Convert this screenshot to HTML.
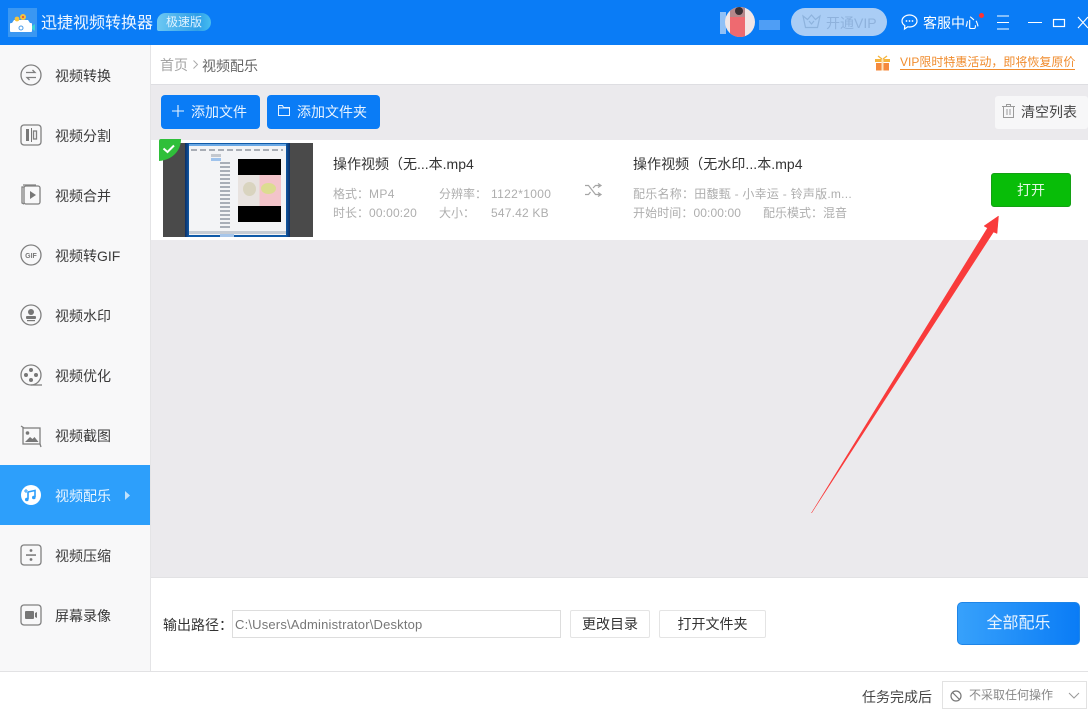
<!DOCTYPE html>
<html lang="zh"><head><meta charset="utf-8"><title>迅捷视频转换器</title>
<style>
html,body{margin:0;padding:0;width:1088px;height:712px;overflow:hidden;background:#fff}
body{position:relative;font-family:"Liberation Sans","Microsoft YaHei","Noto Sans CJK SC",sans-serif;font-size:14px;color:#333}
.a{position:absolute;white-space:nowrap}
svg{position:absolute;overflow:visible}
.nav{position:absolute;left:55px;font-size:14px;line-height:20px;color:#3a3a3a;white-space:nowrap}
.g{color:#aeaeae;font-size:12px;line-height:16px;position:absolute;white-space:nowrap}
.v{letter-spacing:.35px}
.btn{position:absolute;box-sizing:border-box;text-align:center;white-space:nowrap}
.ic{fill:none;stroke:#808080;stroke-width:1.3}
</style></head><body>
<div class="a" style="left:0;top:0;width:1088px;height:45px;background:#0a7cf6"></div>
<div class="a" style="left:8px;top:8px;width:29px;height:29px;background:#3a97f2"></div>
<svg style="left:0;top:0" width="40" height="45"><rect x="10" y="23" width="22" height="9" rx="1" fill="#fff"/><path d="M12 23l2-3h14l2 3z" fill="#fff"/><circle cx="17" cy="19" r="2.400" fill="#f5c33b"/><circle cx="23" cy="17" r="3" fill="#f5c33b"/><circle cx="23" cy="17" r="1.100" fill="#e5573f"/><path d="M32 26l3-2v7l-3-2z" fill="#36d0d8"/><circle cx="21" cy="28" r="2" fill="none" stroke="#4b9ce8"/></svg>
<div class="a" style="left:41px;top:13px;font-size:16px;line-height:21px;color:#eef6ff">迅捷视频转换器</div>
<div class="a" style="left:157px;top:13px;width:54px;height:18px;border-radius:9px 10px 9px 2px;background:linear-gradient(90deg,#6cc8f2,#2f9fe8 75%,#46bdf0);color:#dff2ff;font-size:12px;line-height:18px;text-indent:9px">极速版</div>
<div class="a" style="left:720px;top:12px;width:6px;height:22px;background:#8fc0f7"></div>
<div class="a" style="left:725px;top:7px;width:30px;height:30px;border-radius:50%;background:#f1e6e6;overflow:hidden"><div class="a" style="left:5px;top:0;width:15px;height:30px;background:#b4878a"></div><div class="a" style="left:5px;top:10px;width:15px;height:20px;background:#ee6a70"></div><div class="a" style="left:10px;top:0;width:8px;height:8px;background:#3a3035;border-radius:50%"></div></div>
<div class="a" style="left:759px;top:20px;width:21px;height:10px;background:#4f9ef5"></div>
<div class="a" style="left:791px;top:8px;width:96px;height:28px;border-radius:14px;background:#aacdf5"></div>
<svg style="left:802px;top:14px" width="20" height="16"><path d="M1 2l4.500 3.500L9.500 1l4 4.500L18 2l-2.500 11.500h-12z" fill="none" stroke="#8eb3dd" stroke-width="1.200"/><path d="M7 7l2.500 3L12 7" fill="none" stroke="#8eb3dd" stroke-width="1.200"/></svg>
<div class="a" style="left:826px;top:13px;font-size:14px;line-height:20px;color:#8fb2dc">开通VIP</div>
<svg style="left:901px;top:14px" width="17" height="16"><path d="M8.500 1C4.400 1 1 3.700 1 7c0 1.900 1.100 3.500 2.800 4.600L3.500 15l3.300-2.200c.5.100 1.100.2 1.700.2 4.100 0 7.500-2.700 7.500-6s-3.400-6-7.500-6z" fill="none" stroke="#fff" stroke-width="1.200"/><circle cx="5.500" cy="7" r=".9" fill="#fff"/><circle cx="8.500" cy="7" r=".9" fill="#fff"/><circle cx="11.500" cy="7" r=".9" fill="#fff"/></svg>
<div class="a" style="left:923px;top:13px;font-size:14px;line-height:20px;color:#fff">客服中心</div>
<div class="a" style="left:979px;top:13px;width:5px;height:5px;border-radius:50%;background:#f33"></div>
<svg style="left:997px;top:15px" width="91" height="15"><path d="M0 1h12M0 7.500h12M0 14h12M31 7.500h14" stroke="#fff" stroke-width="1" fill="none"/><rect x="56.500" y="4.500" width="11" height="7" fill="none" stroke="#fff" stroke-width="1.200"/><path d="M81 2l10 11M91 2L81 13" stroke="#fff" stroke-width="1.100" fill="none"/></svg>

<div class="a" style="left:0;top:45px;width:150px;height:626px;background:#f8f8f9;border-right:1px solid #e4e4e6"></div>
<div class="a" style="left:0;top:465px;width:150px;height:60px;background:#2d9ffb"></div>
<div class="nav" style="top:66px">视频转换</div>
<div class="nav" style="top:126px">视频分割</div>
<div class="nav" style="top:186px">视频合并</div>
<div class="nav" style="top:246px">视频转GIF</div>
<div class="nav" style="top:306px">视频水印</div>
<div class="nav" style="top:366px">视频优化</div>
<div class="nav" style="top:426px">视频截图</div>
<div class="nav" style="top:486px;color:#e8f5ff">视频配乐</div>
<div class="nav" style="top:546px">视频压缩</div>
<div class="nav" style="top:606px">屏幕录像</div>
<svg style="left:0;top:45px" width="150" height="600">
<circle class="ic" cx="31" cy="30" r="10"/><path class="ic" d="M26 27.500h9l-2.500-2.500M36 32.500h-9l2.500 2.500"/>
<rect class="ic" x="21" y="80" width="20" height="20" rx="3"/><rect x="26" y="84" width="3" height="12" fill="#777"/><rect x="31" y="83" width="1" height="14" fill="#777"/><rect class="ic" x="33.500" y="86" width="3" height="8"/>
<rect class="ic" x="24" y="141" width="16" height="18" rx="2"/><path class="ic" d="M24 142h-2v16l2 1M23 140h13"/><path d="M30 146l6 4-6 4z" fill="#777"/>
<circle class="ic" cx="31" cy="210" r="10"/><text x="31" y="213" text-anchor="middle" font-size="7" font-weight="700" fill="#777" font-family="Liberation Sans">GIF</text>
<circle class="ic" cx="31" cy="270" r="10"/><circle cx="31" cy="267" r="3" fill="#777"/><rect x="26" y="271" width="10" height="3" rx="1" fill="#777"/><rect x="27" y="275" width="8" height="1.200" fill="#777"/>
<circle class="ic" cx="31" cy="330" r="10"/><path class="ic" d="M31 340h11"/><circle cx="31" cy="325" r="2" fill="#777"/><circle cx="31" cy="335" r="2" fill="#777"/><circle cx="26" cy="330" r="2" fill="#777"/><circle cx="36" cy="330" r="2" fill="#777"/>
<rect class="ic" x="23" y="383" width="17" height="16"/><path class="ic" d="M21 381l3 2M40 399l1 3"/><circle cx="27.500" cy="388" r="1.800" fill="#777"/><path d="M25 397l5-5 2.500 2 2-2 4 5z" fill="#777"/>
<circle cx="31" cy="450" r="10" fill="#fff"/><path d="M28 447v7M28 447l7-1.500v6.500" stroke="#2d9ffb" stroke-width="1.600" fill="none"/><circle cx="26.800" cy="454.500" r="1.800" fill="#2d9ffb"/><circle cx="33.800" cy="452.500" r="1.800" fill="#2d9ffb"/><path d="M24 446h4M26 444v4" stroke="#2d9ffb" fill="none"/>
<path d="M125 446l5 4.500-5 4.500z" fill="#bfe1fc"/>
<rect class="ic" x="21" y="500" width="20" height="20" rx="3"/><rect x="26" y="509.300" width="10" height="1.500" fill="#777"/><circle cx="31" cy="505.500" r="1.400" fill="#777"/><circle cx="31" cy="514.500" r="1.400" fill="#777"/>
<rect class="ic" x="21" y="560" width="20" height="20" rx="3"/><rect x="25" y="566" width="9" height="8" rx="1" fill="#777"/><path d="M35 568l2-1v6l-2-1z" fill="#777"/>
</svg>

<div class="a" style="left:151px;top:45px;width:937px;height:39px;background:#fff;border-bottom:1px solid #dedee2"></div>
<div class="a" style="left:160px;top:55px;font-size:14px;line-height:20px;color:#a5a5a5">首页</div>
<svg style="left:193px;top:60px" width="6" height="10"><path d="M.5 .5l4 4-4 4" fill="none" stroke="#aaa"/></svg>
<div class="a" style="left:202px;top:56px;font-size:14px;line-height:20px;color:#666">视频配乐</div>
<svg style="left:875px;top:56px" width="15" height="15"><rect x="0" y="3" width="15" height="3" fill="#f5b43c"/><rect x="1" y="7" width="13" height="7.500" fill="#f58a3c"/><rect x="6.500" y="3" width="2" height="11.500" fill="#fde3b8"/><path d="M3 0l4 3M12 0L8 3" stroke="#f5b43c" stroke-width="1.300"/></svg>
<div class="a" style="left:900px;top:56px;font-size:12px;line-height:13px;color:#f08c2e;border-bottom:1px solid #f08c2e;width:175px;overflow:hidden">VIP限时特惠活动，即将恢复原价</div>

<div class="a" style="left:151px;top:85px;width:937px;height:492px;background:#ebeaed"></div>
<div class="btn" style="left:161px;top:95px;width:99px;height:34px;background:#0a7cf6;border-radius:4px;color:#e8f3ff;font-size:14px;line-height:34px;padding-left:30px;text-align:left">添加文件</div>
<svg style="left:172px;top:105px" width="12" height="12"><path d="M6 0v12M0 6h12" stroke="#e8f3ff" stroke-width="1.100"/></svg>
<div class="btn" style="left:267px;top:95px;width:113px;height:34px;background:#0a7cf6;border-radius:4px;color:#e8f3ff;font-size:14px;line-height:34px;padding-left:30px;text-align:left">添加文件夹</div>
<svg style="left:278px;top:105px" width="12" height="11"><path d="M.5 10.500V.5h4l1 2h6v8z" fill="none" stroke="#e8f3ff"/><path d="M.5 3h11" stroke="#e8f3ff"/></svg>
<div class="btn" style="left:995px;top:96px;width:93px;height:33px;background:#f7f7f8;border-radius:3px;font-size:14px;line-height:32px;color:#444;padding-left:26px;text-align:left">清空列表</div>
<svg style="left:1002px;top:104px" width="13" height="14"><path d="M0 2.500h13M4.500 2.500V.5h4v2M1.500 2.500v11h10v-11M5 5v6M8 5v6" fill="none" stroke="#9a9a9a"/></svg>

<div class="a" style="left:151px;top:140px;width:937px;height:100px;background:#fff"></div>
<div class="a" style="left:163px;top:143px;width:150px;height:94px;background:#4a4a4a;overflow:hidden">
 <div class="a" style="left:22px;top:0;width:105px;height:94px;background:linear-gradient(90deg,#0d2f63,#0f5aa8 4%,#0f5aa8 96%,#0d2f63)"></div>
 <div class="a" style="left:26px;top:1px;width:97px;height:91px;background:#f3f4f6"></div>
 <div class="a" style="left:26px;top:1px;width:97px;height:2px;background:#6aa8e4"></div>
 <div class="a" style="left:28px;top:6px;width:92px;height:2px;background:repeating-linear-gradient(90deg,#a8adb5 0 6px,#f3f4f6 6px 9px)"></div>
 <div class="a" style="left:57px;top:19px;width:10px;height:68px;background:repeating-linear-gradient(180deg,#a8aeb7 0 2px,#f3f4f6 2px 4px)"></div>
 <div class="a" style="left:48px;top:11px;width:10px;height:3px;background:#c4c8ce"></div>
 <div class="a" style="left:48px;top:15px;width:10px;height:3px;background:#9fc3ec"></div>
 <div class="a" style="left:75px;top:16px;width:43px;height:16px;background:#000"></div>
 <div class="a" style="left:75px;top:32px;width:43px;height:31px;background:linear-gradient(90deg,#e8e3e0 50%,#f3c4ca 50%)"></div>
 <div class="a" style="left:80px;top:39px;width:13px;height:14px;border-radius:50%;background:#d9d4bf"></div>
 <div class="a" style="left:98px;top:40px;width:15px;height:11px;border-radius:50%;background:#dcdc90"></div>
 <div class="a" style="left:75px;top:63px;width:43px;height:16px;background:#000"></div>
 <div class="a" style="left:26px;top:88px;width:97px;height:3px;background:#c6ccd4"></div>
 <div class="a" style="left:57px;top:91px;width:14px;height:3px;background:#a7c6ea"></div>
</div>
<svg style="left:159px;top:139px" width="22" height="22"><path d="M0 2a2 2 0 0 1 2-2h20c0 12-9 21-22 22z" fill="#2fbf3a"/><path d="M4.500 9.500l4 3.500 6.500-6.500" fill="none" stroke="#fff" stroke-width="2"/></svg>

<div class="a" style="left:333px;top:155px;font-size:14px;line-height:19px;color:#333">操作视频（无...本.mp4</div>
<div class="g" style="left:333px;top:186px">格式：</div><div class="g v" style="left:369px;top:186px">MP4</div>
<div class="g" style="left:439px;top:186px">分辨率：</div><div class="g v" style="left:491px;top:186px">1122*1000</div>
<div class="g" style="left:333px;top:205px">时长：</div><div class="g" style="left:369px;top:205px;letter-spacing:.15px">00:00:20</div>
<div class="g" style="left:439px;top:205px">大小：</div><div class="g" style="left:491px;top:205px;letter-spacing:.2px">547.42 KB</div>
<svg style="left:585px;top:183px" width="17" height="14"><path d="M0 2.500h3.500l7 9H15M0 11.500h3.500l2-2.500M8 5l2.500-2.500H15M13 .5l3 2-3 2M13 9.500l3 2-3 2" fill="none" stroke="#a5a5a5" stroke-width="1.200"/></svg>
<div class="a" style="left:633px;top:155px;font-size:14px;line-height:19px;color:#333;letter-spacing:.05px">操作视频（无水印...本.mp4</div>
<div class="g" style="left:633px;top:186px;letter-spacing:.25px">配乐名称：田馥甄 - 小幸运 - 铃声版.m...</div>
<div class="g" style="left:633px;top:205px;letter-spacing:.1px">开始时间：00:00:00</div>
<div class="g" style="left:763px;top:205px">配乐模式：混音</div>
<div class="btn" style="left:991px;top:173px;width:80px;height:34px;background:#08bd08;border:1px solid #14a014;border-radius:3px;color:#e4f8e4;font-size:14px;line-height:32px">打开</div>

<svg style="left:0;top:0" width="1088" height="712"><path d="M998.500 216L984 226l3.500 2L811.500 513 993.500 232l3.500 1.500z" fill="#f93b3b" stroke="#f93b3b" stroke-width=".5" stroke-linejoin="round"/></svg>

<div class="a" style="left:151px;top:577px;width:937px;height:94px;background:#fff;border-top:1px solid #e2e2e4"></div>
<div class="a" style="left:0;top:671px;width:1088px;height:1px;background:#e2e2e4"></div>
<div class="a" style="left:163px;top:615px;font-size:14px;line-height:20px;color:#333">输出路径：</div>
<div class="btn" style="left:232px;top:610px;width:329px;height:28px;border:1px solid #ddd;font-size:13px;line-height:27px;color:#777;text-align:left;padding-left:2px;letter-spacing:.18px">C:\Users\Administrator\Desktop</div>
<div class="btn" style="left:570px;top:610px;width:80px;height:28px;border:1px solid #e4e4e4;border-radius:2px;font-size:14px;line-height:26px;color:#333">更改目录</div>
<div class="btn" style="left:659px;top:610px;width:107px;height:28px;border:1px solid #e4e4e4;border-radius:2px;font-size:14px;line-height:26px;color:#333">打开文件夹</div>
<div class="btn" style="left:957px;top:602px;width:123px;height:43px;border-radius:5px;background:linear-gradient(90deg,#37a1fb,#0a7cf6);border:1px solid #1e85e8;color:#e8f4ff;font-size:16px;line-height:41px">全部配乐</div>

<div class="a" style="left:862px;top:688px;font-size:14px;line-height:19px;color:#444">任务完成后</div>
<div class="a" style="left:942px;top:681px;width:143px;height:26px;box-sizing:content-box;border:1px solid #e2e2e2"></div>
<svg style="left:950px;top:690px" width="12" height="12"><circle cx="6" cy="6" r="5" fill="none" stroke="#777" stroke-width="1.200"/><path d="M2.500 2.500l7 7" stroke="#777" stroke-width="1.200"/></svg>
<div class="a" style="left:969px;top:687px;font-size:12px;line-height:17px;color:#888">不采取任何操作</div>
<svg style="left:1068px;top:692px" width="12" height="8"><path d="M1 1l5 5 5-5" fill="none" stroke="#999"/></svg>
</body></html>
